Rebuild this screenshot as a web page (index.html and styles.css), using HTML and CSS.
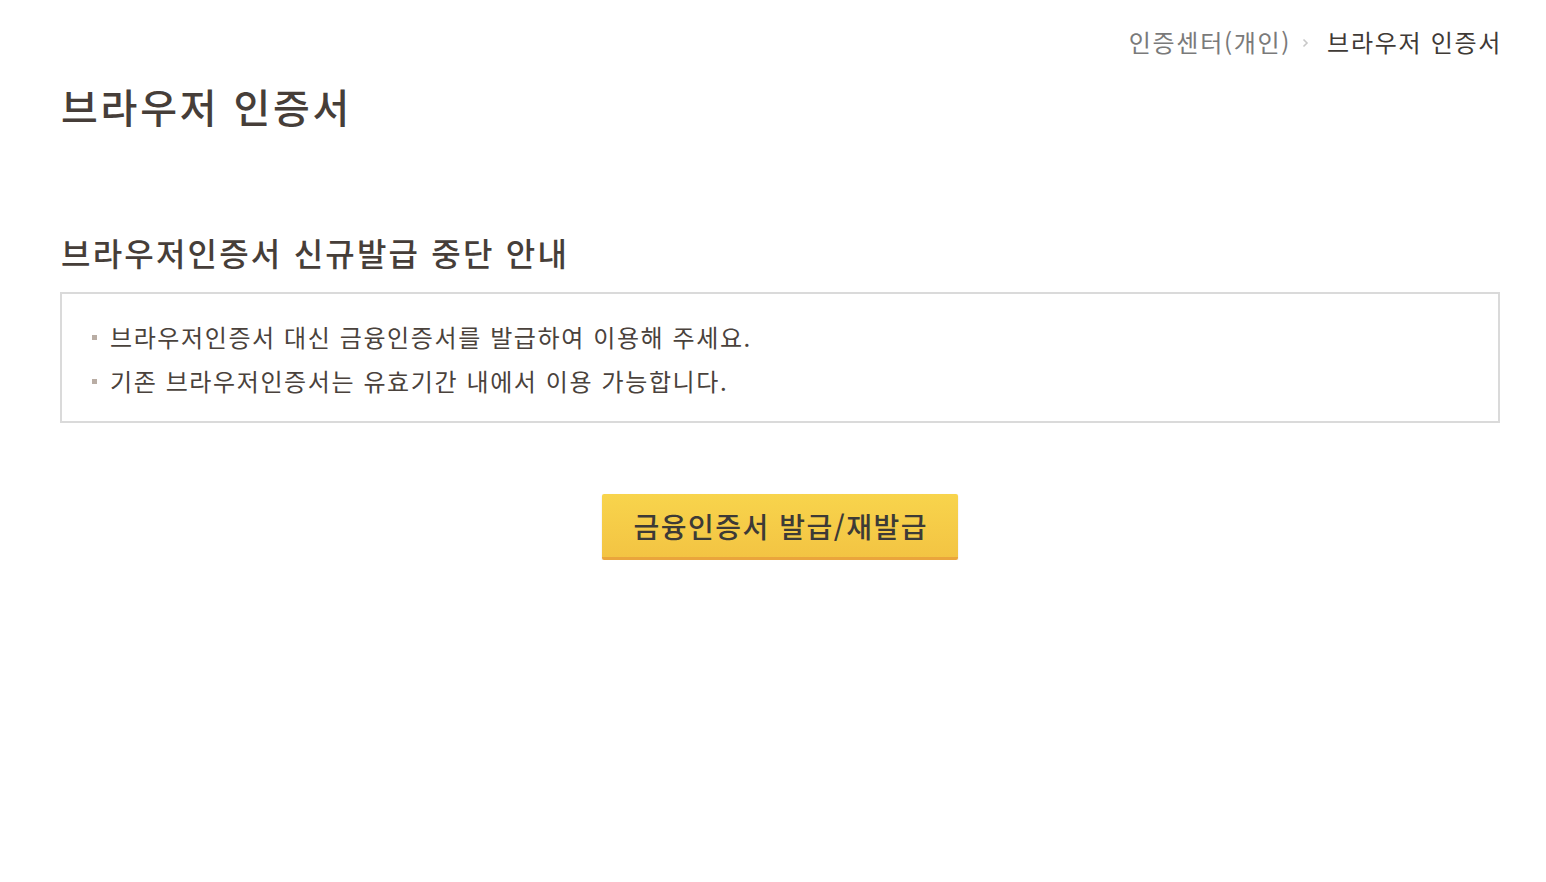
FILE: index.html
```html
<!DOCTYPE html>
<html lang="ko">
<head>
<meta charset="utf-8">
<title>브라우저 인증서</title>
<link rel="stylesheet" href="styles.css">
</head>
<body>
<div class="page">
  <nav class="breadcrumb">
    <span class="crumb">인증센터(개인)</span>
    <svg class="sep" width="7" height="10" viewBox="0 0 7 10"><path d="M1.5 1.5 L5 5 L1.5 8.5" fill="none" stroke="#c8c8c8" stroke-width="1.6"/></svg>
    <span class="crumb current">브라우저 인증서</span>
  </nav>
  <h1 class="title">브라우저 인증서</h1>
  <h2 class="section-title">브라우저인증서 신규발급 중단 안내</h2>
  <div class="notice">
    <ul class="notice-list">
      <li>브라우저인증서 대신 금융인증서를 발급하여 이용해 주세요.</li>
      <li>기존 브라우저인증서는 유효기간 내에서 이용 가능합니다.</li>
    </ul>
  </div>
  <div class="actions">
    <button class="btn-primary" type="button">금융인증서 발급/재발급</button>
  </div>
</div>
</body>
</html>
```

FILE: styles.css
```css
* { box-sizing: border-box; }
html, body { margin: 0; padding: 0; background: #fff; }
body {
  font-family: "Noto Sans CJK KR", "Noto Sans", sans-serif;
  color: #4a423c;
}
.page {
  padding: 0 44px 0 60px;
}
.breadcrumb {
  display: flex;
  justify-content: flex-end;
  align-items: center;
  margin-top: 27px;
  height: 30px;
  font-size: 24px;
  line-height: 30px;
  letter-spacing: 1.7px;
}
.crumb { color: #7a7a7a; }
.crumb.current { color: #3f3a36; }
.sep { margin: 2px 18px 0 11px; }
.title {
  margin: 25px 0 0 1px;
  font-size: 40px;
  line-height: 48px;
  font-weight: 500;
  color: #463e39;
  letter-spacing: 2.8px;
}
.section-title {
  margin: 102px 0 0 1px;
  font-size: 32px;
  line-height: 40px;
  font-weight: 500;
  color: #463e39;
  letter-spacing: 2.2px;
}
.notice {
  margin-top: 20px;
  margin-right: 2px;
  border: 2px solid #dadada;
  padding: 21px 30px 18px;
}
.notice-list {
  list-style: none;
  margin: 0;
  padding: 0;
}
.notice-list li {
  display: flex;
  align-items: center;
  font-size: 24px;
  line-height: 44px;
  color: #4a423c;
  letter-spacing: 1.6px;
}
.notice-list li::before {
  content: "";
  width: 5px;
  height: 5px;
  background: #b9ada4;
  margin-right: 13px;
  flex: none;
}
.actions {
  display: flex;
  justify-content: center;
  margin-right: 2px;
  margin-top: 71px;
}
.btn-primary {
  width: 356px;
  height: 66px;
  border: 0;
  border-bottom: 3px solid #eaa53c;
  border-radius: 2px;
  background: linear-gradient(#f8d44c, #f3c443);
  box-shadow: 0 1px 2px rgba(0,0,0,0.12);
  font-family: "Noto Sans CJK KR", "Noto Sans", sans-serif;
  font-size: 28px;
  font-weight: 500;
  color: #3d3a36;
  letter-spacing: 1.5px;
  padding: 0 0 0 1.5px;
  cursor: pointer;
}
```
